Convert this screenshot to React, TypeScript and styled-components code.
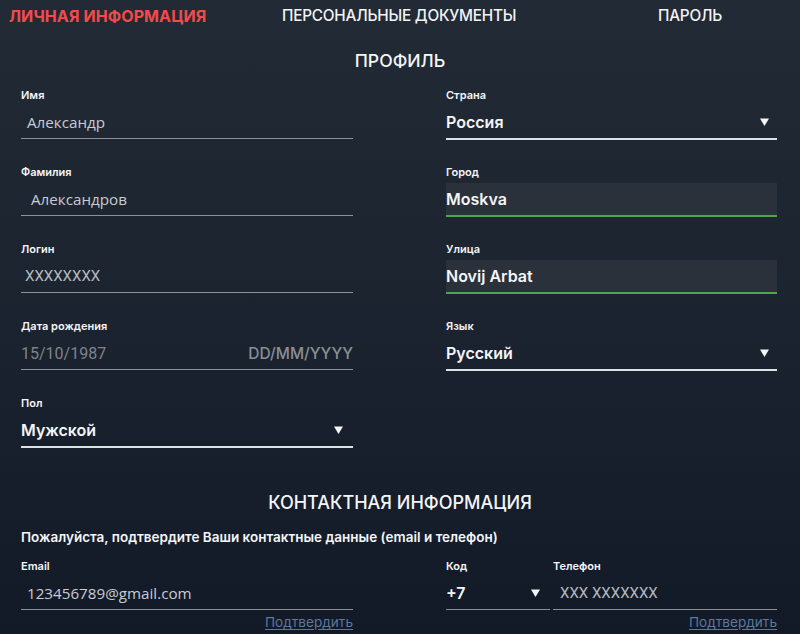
import React from "react";
import styled, { createGlobalStyle } from "styled-components";

const Global = createGlobalStyle`
  html, body { margin: 0; padding: 0; }
  body {
    width: 800px;
    height: 634px;
    overflow: hidden;
    background: linear-gradient(180deg, #222a35 0%, #1c2430 45%, #121a28 100%);
    font-family: Inter, "Noto Sans", sans-serif;
    color: #fff;
  }
`;

const Page = styled.div`
  width: 800px;
  height: 634px;
  box-sizing: border-box;
  padding: 0 23px 0 21px;
  display: flex;
  flex-direction: column;
`;

const Tabs = styled.nav`
  height: 33px;
  display: flex;
  align-items: center;
  margin-left: -12px;
  margin-top: -1px;
`;

const Tab = styled.div<{ $active?: boolean; $w: number }>`
  width: ${(p) => p.$w}px;
  flex: none;
  font-size: ${(p) => (p.$active ? 16 : 15.3)}px;
  font-weight: ${(p) => (p.$active ? 700 : 500)};
  color: ${(p) => (p.$active ? "#f44a4a" : "#f2f3f5")};
  text-transform: uppercase;
  letter-spacing: ${(p) => (p.$active ? "0.1px" : "-0.2px")};
  white-space: nowrap;
`;

const SectionTitle = styled.h2<{ $top: number; $size: number }>`
  margin: ${(p) => p.$top}px 0 0;
  text-align: center;
  font-size: ${(p) => p.$size}px;
  font-weight: 500;
  line-height: 22px;
  color: #f4f5f7;
  padding-left: 2px;
`;

const Columns = styled.div`
  display: grid;
  grid-template-columns: 332px 331px;
  column-gap: 93px;
  margin-top: 17px;
`;

const Column = styled.div`
  display: flex;
  flex-direction: column;
  gap: 26px;
`;

const Field = styled.div`
  display: flex;
  flex-direction: column;
  gap: 4px;
  min-width: 0;
`;

const Label = styled.label`
  font-size: 11px;
  line-height: 13px;
  font-weight: 600;
  color: #f4f5f7;
  white-space: nowrap;
`;

type Line = "grey" | "white" | "green";

const lineColor: Record<Line, string> = {
  grey: "#8c9198",
  white: "#dde0e5",
  green: "#4aa84a",
};

const Box = styled.div<{ $line: Line; $filled?: boolean }>`
  height: 32px;
  display: flex;
  align-items: center;
  border-bottom: ${(p) => (p.$line === "grey" ? 1 : 2)}px solid ${(p) => lineColor[p.$line]};
  margin-bottom: ${(p) => (p.$line === "grey" ? 1 : 0)}px;
  background: ${(p) => (p.$filled ? "#2b313b" : "transparent")};
`;

const Value = styled.span<{ $indent?: number }>`
  padding-left: ${(p) => p.$indent ?? 0}px;
  font-family: "Open Sans", "Noto Sans", sans-serif;
  font-size: 15.2px;
  color: #c9ccd1;
  flex: 1;
  white-space: nowrap;
`;

const PlainValue = styled.span<{ $indent?: number; $tone: "dim" | "faint" }>`
  padding-left: ${(p) => p.$indent ?? 0}px;
  font-family: Roboto, "Noto Sans", sans-serif;
  font-size: ${(p) => (p.$tone === "dim" ? 15 : 16)}px;
  color: ${(p) => (p.$tone === "dim" ? "#b5b9bf" : "#7f848b")};
  flex: 1;
  white-space: nowrap;
`;

const Strong = styled.span`
  font-size: 16px;
  font-weight: 600;
  color: #f4f5f7;
  flex: 1;
  white-space: nowrap;
`;

const Hint = styled.span`
  font-size: 15.5px;
  font-weight: 500;
  color: #8a8f96;
`;

const Caret = styled.svg<{ $right: number }>`
  width: 9px;
  height: 8px;
  margin-right: ${(p) => p.$right}px;
  flex: none;
`;

const Arrow = ({ right = 8 }: { right?: number }) => (
  <Caret $right={right} viewBox="0 0 9 8">
    <path d="M0 0.5 H9 L4.5 8 Z" fill="#f4f5f7" />
  </Caret>
);

const Note = styled.p`
  margin: 15px 0 0;
  font-size: 13.5px;
  line-height: 16px;
  font-weight: 600;
  color: #f4f5f7;
`;

const Spacer = styled.div`
  width: 93px;
`;

const ConfirmLink = styled.a`
  align-self: flex-end;
  margin-top: 3px;
  font-size: 13.6px;
  line-height: 16px;
  color: #5f7799;
  text-decoration: underline;
  text-underline-offset: 2px;
  cursor: pointer;
`;

const ContactGrid = styled.div`
  display: flex;
  margin-top: 15px;
`;

const Group = styled.div<{ $w: number; $gap?: number }>`
  width: ${(p) => p.$w}px;
  flex: none;
  display: flex;
  gap: ${(p) => p.$gap ?? 0}px;
`;

const Col = styled.div<{ $w: number }>`
  width: ${(p) => p.$w}px;
  flex: none;
  display: flex;
  flex-direction: column;
`;

export default function App() {
  return (
    <>
      <Global />
      <Page>
        <Tabs>
          <Tab $active $w={273}>Личная информация</Tab>
          <Tab $w={376}>Персональные документы</Tab>
          <Tab $w={100}>Пароль</Tab>
        </Tabs>
        <SectionTitle $top={18} $size={17.6}>ПРОФИЛЬ</SectionTitle>
        <Columns>
          <Column>
            <Field>
              <Label>Имя</Label>
              <Box $line="grey"><Value $indent={6}>Александр</Value></Box>
            </Field>
            <Field>
              <Label>Фамилия</Label>
              <Box $line="grey"><Value $indent={10}>Александров</Value></Box>
            </Field>
            <Field>
              <Label>Логин</Label>
              <Box $line="grey"><PlainValue $indent={4} $tone="dim">XXXXXXXX</PlainValue></Box>
            </Field>
            <Field>
              <Label>Дата рождения</Label>
              <Box $line="grey">
                <PlainValue $tone="faint">15/10/1987</PlainValue>
                <Hint>DD/MM/YYYY</Hint>
              </Box>
            </Field>
            <Field>
              <Label>Пол</Label>
              <Box $line="white"><Strong>Мужской</Strong><Arrow right={10} /></Box>
            </Field>
          </Column>
          <Column>
            <Field>
              <Label>Страна</Label>
              <Box $line="white"><Strong>Россия</Strong><Arrow /></Box>
            </Field>
            <Field>
              <Label>Город</Label>
              <Box $line="green" $filled><Strong>Moskva</Strong></Box>
            </Field>
            <Field>
              <Label>Улица</Label>
              <Box $line="green" $filled><Strong>Novij Arbat</Strong></Box>
            </Field>
            <Field>
              <Label>Язык</Label>
              <Box $line="white"><Strong>Русский</Strong><Arrow /></Box>
            </Field>
          </Column>
        </Columns>
        <SectionTitle $top={44} $size={18}>КОНТАКТНАЯ ИНФОРМАЦИЯ</SectionTitle>
        <Note>Пожалуйста, подтвердите Ваши контактные данные (email и телефон)</Note>
        <ContactGrid>
          <Col $w={332}>
            <Field>
              <Label>Email</Label>
              <Box $line="grey"><Value $indent={6}>123456789@gmail.com</Value></Box>
            </Field>
            <ConfirmLink>Подтвердить</ConfirmLink>
          </Col>
          <Spacer />
          <Group $w={331} $gap={3}>
            <Col $w={104}>
              <Field>
                <Label>Код</Label>
                <Box $line="grey"><Strong>+7</Strong><Arrow right={10} /></Box>
              </Field>
            </Col>
            <Col $w={224}>
              <Field>
                <Label>Телефон</Label>
                <Box $line="grey"><PlainValue $indent={7} $tone="dim">XXX XXXXXXX</PlainValue></Box>
              </Field>
              <ConfirmLink>Подтвердить</ConfirmLink>
            </Col>
          </Group>
        </ContactGrid>
      </Page>
    </>
  );
}
